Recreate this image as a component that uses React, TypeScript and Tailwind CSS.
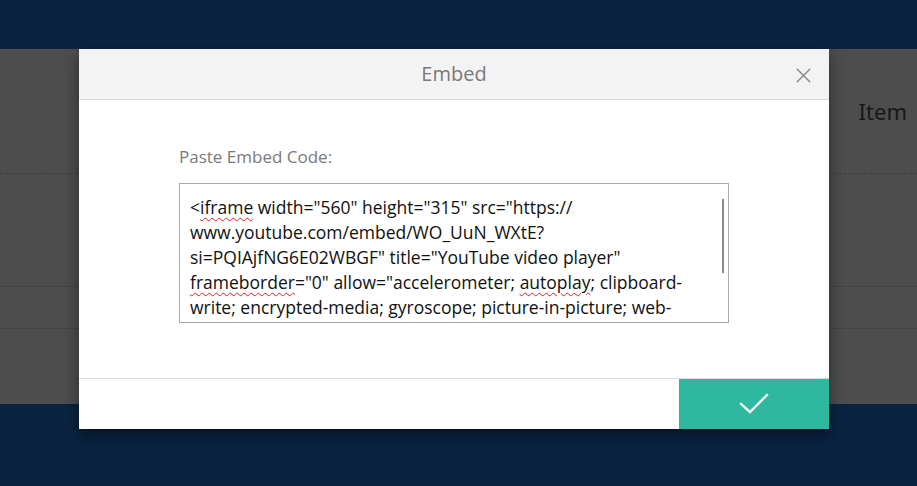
import { X } from 'lucide-react'

function Squiggle({ children }: { children: React.ReactNode }) {
  return (
    <span className="underline decoration-wavy decoration-[#e02020] decoration-1 underline-offset-[3px]">{children}</span>
  )
}

export default function App() {
  return (
    <div className="relative flex h-[486px] w-[917px] flex-col overflow-hidden bg-[#0a2340] font-['Open_Sans',sans-serif]">
      <div className="h-[49px] shrink-0" />
      <div className="flex h-[355px] shrink-0 flex-col bg-[#4d4d4d]">
        <div className="flex h-[125px] items-center justify-end border-b border-dashed border-[#3f3f3a] pr-[10px]">
          <span className="font-['Noto_Sans',sans-serif] text-[22px] text-[#171717]">Item</span>
        </div>
        <div className="h-[113px] border-b border-[#444]" />
        <div className="h-[42px] border-b border-[#444]" />
      </div>

      <div className="absolute left-[79px] top-[49px] flex h-[380px] w-[750px] flex-col bg-white shadow-[0_6px_14px_rgba(0,0,0,0.45)]">
        <header className="relative flex h-[51px] shrink-0 items-center justify-center border-b border-[#dcdcdc] bg-[#f3f3f3]">
          <span className="text-[20px] text-[#7a7a7a]">Embed</span>
          <X className="absolute right-[13px] top-[14px] h-[25px] w-[25px] text-[#8a8a8a]" strokeWidth={1.4} />
        </header>

        <div className="flex flex-1 flex-col px-[100px] pt-[45px]">
          <label className="text-[17px] leading-[24px] text-[#7a7a7a]">Paste Embed Code:</label>
          <div className="relative mt-[14px] h-[140px] w-[550px] overflow-hidden border border-[#a9a9a9] pl-[10px] pr-[30px] pt-[11px] text-[17.5px] leading-[25px] text-[#111]">
            <p className="break-words">
              &lt;<Squiggle>iframe</Squiggle> width="560" height="315" src="https://<wbr />www.youtube.com/embed/WO_UuN_WXtE?<wbr />si=PQIAjfNG6E02WBGF" title="YouTube video player" <Squiggle>frameborder</Squiggle>="0" allow="accelerometer; <Squiggle>autoplay</Squiggle>; clipboard-write; encrypted-media; gyroscope; picture-in-picture; web-share" <Squiggle>referrerpolicy</Squiggle>="strict-origin-when-cross-origin" <Squiggle>allowfullscreen</Squiggle>&gt;&lt;/<Squiggle>iframe</Squiggle>&gt;
            </p>
            <div className="absolute right-[4px] top-[15px] h-[74px] w-[2px] bg-[#8a8a8a]" />
          </div>
        </div>

        <footer className="flex h-[51px] shrink-0 justify-end border-t border-[#dcdcdc]">
          <button type="button" className="flex h-full w-[150px] items-center justify-center bg-[#2eb8a0]">
            <svg width="30" height="22" viewBox="0 0 30 22" fill="none">
              <path d="M2 11 L11 19 L28 2" stroke="#f2f2f2" strokeWidth="2.4" strokeLinecap="square" />
            </svg>
          </button>
        </footer>
      </div>
    </div>
  )
}
